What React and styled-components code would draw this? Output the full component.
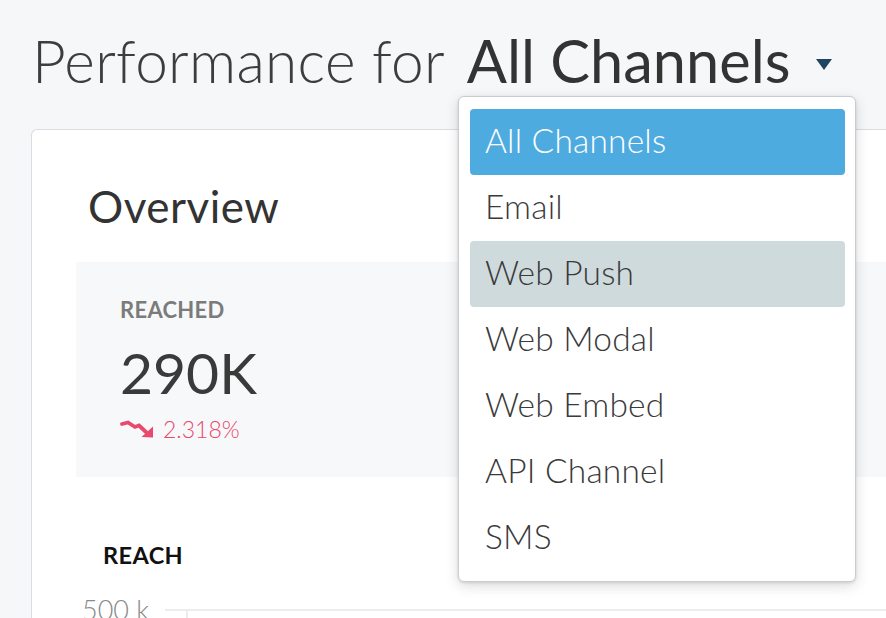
import React from "react";
import styled, { createGlobalStyle } from "styled-components";

const Global = createGlobalStyle`
  html, body { margin: 0; padding: 0; }
  body {
    background: #f6f7f9;
    font-family: Lato, "Noto Sans", sans-serif;
    color: #3a3a3a;
    overflow: hidden;
    width: 886px;
    height: 618px;
  }
`;

const Page = styled.div`
  position: relative;
  width: 886px;
  height: 618px;
  overflow: hidden;
  padding: 31px 0 0 31px;
  box-sizing: border-box;
`;

const Header = styled.div`
  display: flex;
  align-items: baseline;
  height: 98px;
  margin-left: 1px;
  line-height: 1;
`;

const TitleLight = styled.span`
  font-size: 58.5px;
  font-weight: 300;
  color: #3d3d3d;
  letter-spacing: 0.3px;
  margin-right: 22px;
`;

const TitleStrong = styled.span`
  font-size: 59.5px;
  font-weight: 400;
  color: #333;
`;

const Caret = styled.svg`
  width: 16px;
  height: 11px;
  margin-left: 26px;
  align-self: flex-start;
  margin-top: 28px;
`;

const Card = styled.div`
  background: #fff;
  border: 1px solid #d9dce0;
  border-right: none;
  border-radius: 6px 0 0 0;
  height: 600px;
  padding: 50px 0 0 44px;
  box-sizing: border-box;
`;

const CardTitle = styled.h2`
  margin: 0 0 30px 12px;
  font-size: 44px;
  line-height: 52px;
  font-weight: 400;
  color: #333;
  letter-spacing: 0.5px;
`;

const StatBox = styled.div`
  background: #f7f8fa;
  height: 215px;
  padding: 35px 0 0 44px;
  box-sizing: border-box;
`;

const StatLabel = styled.div`
  font-size: 22px;
  line-height: 26px;
  font-weight: 700;
  color: #7b7b7b;
  letter-spacing: 0.3px;
`;

const StatValue = styled.div`
  font-size: 57px;
  font-weight: 400;
  color: #3a3a3a;
  margin-top: 17px;
  line-height: 64px;
`;

const Trend = styled.div`
  display: flex;
  align-items: center;
  gap: 9px;
  color: #e9496d;
  font-size: 23px;
  line-height: 28px;
  font-weight: 300;
  margin-top: 11px;
`;

const ChartSection = styled.div`
  padding: 64px 0 0 27px;
`;

const ChartLabel = styled.div`
  font-size: 23.5px;
  line-height: 28px;
  font-weight: 700;
  color: #111;
  letter-spacing: 0.4px;
`;

const AxisRow = styled.div`
  display: flex;
  align-items: center;
  margin-top: 26px;
  margin-left: -21px;
`;

const AxisLabel = styled.span`
  font-size: 27px;
  line-height: 30px;
  font-weight: 300;
  color: #8a8a8a;
  width: 83px;
`;

const AxisLine = styled.div`
  flex: 1;
  height: 2px;
  background: #ececec;
  position: relative;
  &::after {
    content: "";
    position: absolute;
    left: 21px;
    top: 0;
    width: 2px;
    height: 30px;
    background: #ececec;
  }
`;

const Menu = styled.ul`
  position: absolute;
  left: 458px;
  top: 96px;
  width: 398px;
  box-sizing: border-box;
  margin: 0;
  list-style: none;
  padding: 12px 10px 10px 11px;
  background: #fff;
  border: 1px solid #c9cdd2;
  border-radius: 6px;
  box-shadow: 0 4px 14px rgba(0, 0, 0, 0.14), 0 1px 3px rgba(0, 0, 0, 0.12);
`;

const Item = styled.li`
  height: 66px;
  display: flex;
  align-items: center;
  padding-left: 15px;
  padding-bottom: 5px;
  box-sizing: border-box;
  border-radius: 4px;
  font-size: 33.5px;
  font-weight: 300;
  letter-spacing: 0.2px;
  color: ${(p) => (p.$selected ? "#fff" : "#3a3a3a")};
  background: ${(p) =>
    p.$selected ? "#4eabe0" : p.$hover ? "#cfdadd" : "transparent"};
`;

const items = [
  "All Channels",
  "Email",
  "Web Push",
  "Web Modal",
  "Web Embed",
  "API Channel",
  "SMS",
];

function TrendDown() {
  return (
    <svg width="34" height="20" viewBox="0 0 34 20">
      <path
        d="M2 5 L8 3.5 L15 8 L19 6.5 L27 14"
        fill="none"
        stroke="#e9496d"
        strokeWidth="3.8"
        strokeLinejoin="miter"
        strokeLinecap="round"
      />
      <path d="M21.5 18 L33 18.5 L33 7.5 Z" fill="#e9496d" />
    </svg>
  );
}

export default function App() {
  return (
    <>
      <Global />
      <Page>
        <Header>
          <TitleLight>Performance for</TitleLight>
          <TitleStrong>All Channels</TitleStrong>
          <Caret viewBox="0 0 16 11">
            <path d="M0 0 H16 L8 11 Z" fill="#1f4560" />
          </Caret>
        </Header>
        <Card>
          <CardTitle>Overview</CardTitle>
          <StatBox>
            <StatLabel>REACHED</StatLabel>
            <StatValue>290K</StatValue>
            <Trend>
              <TrendDown />
              <span>2.318%</span>
            </Trend>
          </StatBox>
          <ChartSection>
            <ChartLabel>REACH</ChartLabel>
            <AxisRow>
              <AxisLabel>500 k</AxisLabel>
              <AxisLine />
            </AxisRow>
          </ChartSection>
        </Card>
        <Menu>
          {items.map((it, i) => (
            <Item key={it} $selected={i === 0} $hover={i === 2}>
              {it}
            </Item>
          ))}
        </Menu>
      </Page>
    </>
  );
}
